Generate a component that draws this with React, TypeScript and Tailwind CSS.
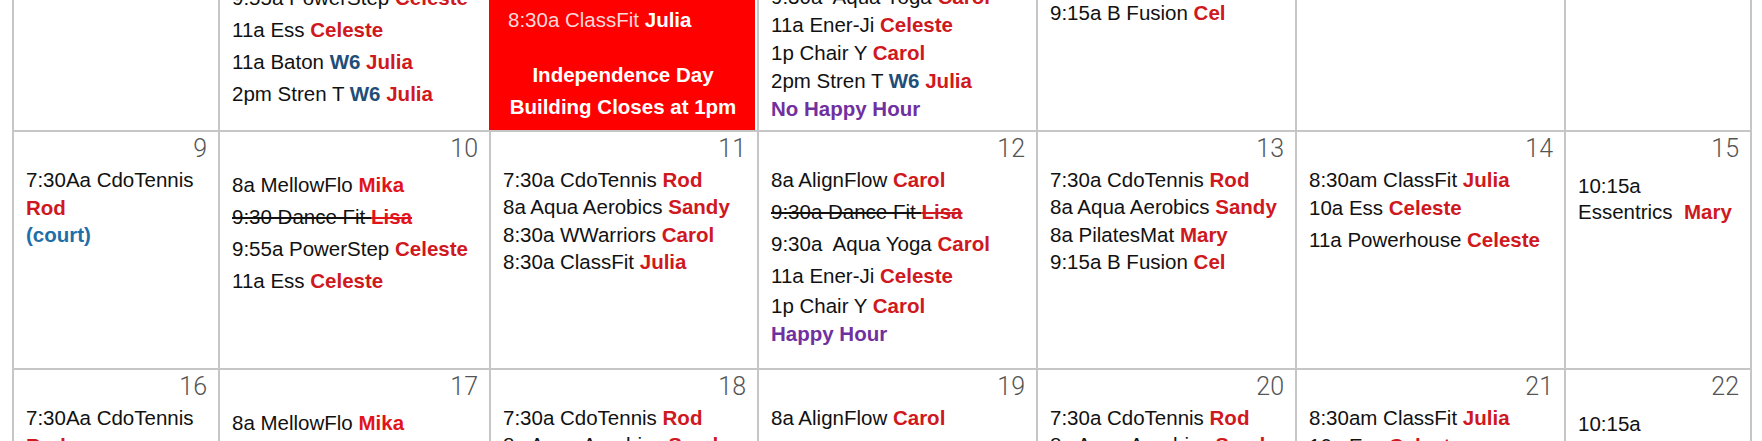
import React from 'react'

type Kind = 'red' | 'hot' | 'w6' | 'court' | 'purple' | 'pink' | 'white'
type Part = { t: string; k?: Kind; s?: boolean }
type Line = { p: Part[]; cls?: string }
type Cell = { day?: number; lh?: string; mt?: string; pb?: string; lines: Line[] }

const KIND: Record<Kind, string> = {
  red: 'font-bold text-[#cf1820]',
  hot: 'font-bold text-[#e3131b]',
  w6: 'font-bold text-[#1f4e79]',
  court: 'font-bold text-[#1f6ea8]',
  purple: 'font-bold text-[#7030a0]',
  pink: 'text-[#fbd9d9]',
  white: 'font-bold text-white',
}

// shorthand builders
const n = (t: string): Part => ({ t })
const r = (t: string): Part => ({ t, k: 'red' })
const L = (...p: Part[]): Line => ({ p })

const W6 = (name: string) => [n(' '), { t: 'W6', k: 'w6' as Kind }, n(' '), r(name)]

// week of the 2nd — only the bottom of it is on screen
const WEEK1: Cell[] = [
  { lines: [] },
  {
    lh: 'leading-[32px]',
    pb: 'pb-[20px]',
    lines: [
      L(n('8a MellowFlo '), { t: 'Mika', k: 'hot' }),
      L({ t: '9:30 Dance Fit ', s: true }, { t: 'Lisa', k: 'hot', s: true }),
      L(n('9:55a PowerStep '), r('Celeste')),
      L(n('11a Ess '), r('Celeste')),
      L(n('11a Baton'), ...W6('Julia')),
      L(n('2pm Stren T'), ...W6('Julia')),
    ],
  },
  { lines: [] }, // holiday, drawn separately
  {
    lh: 'leading-[28px]',
    pb: 'pb-[7px]',
    lines: [
      L(n('8a AlignFlow '), r('Carol')),
      L({ t: '9:30a Dance Fit ', s: true }, { t: 'Lisa', k: 'red', s: true }),
      L(n('9:30a\u00a0 Aqua Yoga '), r('Carol')),
      L(n('11a Ener-Ji '), r('Celeste')),
      L(n('1p Chair Y '), r('Carol')),
      L(n('2pm Stren T'), ...W6('Julia')),
      L({ t: 'No Happy Hour', k: 'purple' }),
    ],
  },
  {
    lh: 'leading-[27px]',
    pb: 'pb-[104px]',
    lines: [
      L(n('7:30a CdoTennis '), r('Rod')),
      L(n('8a Aqua Aerobics '), r('Sandy')),
      L(n('8a PilatesMat '), r('Mary')),
      L(n('9:15a B Fusion '), r('Cel')),
    ],
  },
  { lines: [] },
  { lines: [] },
]

const week = (start: number): Cell[] => [
  {
    day: start,
    lh: 'leading-[27.5px]',
    mt: 'mt-[4px]',
    lines: [L(n('7:30Aa CdoTennis')), L(r('Rod')), L({ t: '(court)', k: 'court' })],
  },
  {
    day: start + 1,
    lh: 'leading-[32px]',
    mt: 'mt-[7px]',
    lines: [
      L(n('8a MellowFlo '), { t: 'Mika', k: 'hot' }),
      L({ t: '9:30 Dance Fit ', s: true }, { t: 'Lisa', k: 'hot', s: true }),
      L(n('9:55a PowerStep '), r('Celeste')),
      L(n('11a Ess '), r('Celeste')),
    ],
  },
  {
    day: start + 2,
    lh: 'leading-[27.3px]',
    mt: 'mt-[4px]',
    lines: [
      L(n('7:30a CdoTennis '), r('Rod')),
      L(n('8a Aqua Aerobics '), r('Sandy')),
      L(n('8:30a WWarriors '), r('Carol')),
      L(n('8:30a ClassFit '), r('Julia')),
    ],
  },
  {
    day: start + 3,
    lh: 'leading-[32px]',
    mt: 'mt-[2px]',
    lines: [
      L(n('8a AlignFlow '), r('Carol')),
      L({ t: '9:30a Dance Fit ', s: true }, { t: 'Lisa', k: 'red', s: true }),
      L(n('9:30a\u00a0 Aqua Yoga '), r('Carol')),
      L(n('11a Ener-Ji '), r('Celeste')),
      { p: [n('1p Chair Y '), r('Carol')], cls: 'leading-[28px]' },
      { p: [{ t: 'Happy Hour', k: 'purple' }], cls: 'leading-[28px]' },
    ],
  },
  {
    day: start + 4,
    lh: 'leading-[27.3px]',
    mt: 'mt-[4px]',
    lines: [
      L(n('7:30a CdoTennis '), r('Rod')),
      L(n('8a Aqua Aerobics '), r('Sandy')),
      L(n('8a PilatesMat '), r('Mary')),
      L(n('9:15a B Fusion '), r('Cel')),
    ],
  },
  {
    day: start + 5,
    lh: 'leading-[28px]',
    mt: 'mt-[4px]',
    lines: [
      L(n('8:30am ClassFit '), r('Julia')),
      L(n('10a Ess '), r('Celeste')),
      { p: [n('11a Powerhouse '), r('Celeste')], cls: 'mt-[4px]' },
    ],
  },
  {
    day: start + 6,
    lh: 'leading-[26px]',
    mt: 'mt-[11px]',
    lines: [L(n('10:15a')), L(n('Essentrics\u00a0 '), r('Mary'))],
  },
]

const EventLine = ({ line }: { line: Line }) => (
  <div className={`shrink-0 whitespace-nowrap ${line.cls ?? ''}`}>
    {line.p.map((part, i) => (
      <span key={i} className={`${part.k ? KIND[part.k] : ''} ${part.s ? 'line-through' : ''}`}>
        {part.t}
      </span>
    ))}
  </div>
)

const lineColor = 'border-[#c6c6c6]'

function TopCell({ cell, last }: { cell: Cell; last: boolean }) {
  return (
    <div
      className={`border-l-2 ${last ? 'border-r-2' : ''} ${lineColor} overflow-hidden flex flex-col justify-end pl-[12px] ${cell.lh ?? ''} ${cell.pb ?? ''}`}
    >
      {cell.lines.map((l, i) => (
        <EventLine key={i} line={l} />
      ))}
    </div>
  )
}

function HolidayCell() {
  return (
    <div className="border-l-2 border-[#ff0000] overflow-hidden flex">
      <div className="flex-1 mr-[2px] bg-[#ff0000] flex flex-col justify-end pb-[7px]">
        <div className="shrink-0 pl-[17px] leading-[27px] whitespace-nowrap">
          <span className={KIND.pink}>8:30a WWarriors </span>
          <span className={KIND.white}>Carol</span>
        </div>
        <div className="shrink-0 pl-[17px] leading-[27px] mb-[26px] whitespace-nowrap">
          <span className={KIND.pink}>8:30a ClassFit </span>
          <span className={KIND.white}>Julia</span>
        </div>
        <div className="shrink-0 text-center font-bold text-white leading-[32px]">Independence Day</div>
        <div className="shrink-0 text-center font-bold text-white leading-[32px]">Building Closes at 1pm</div>
      </div>
    </div>
  )
}

function DayCell({ cell, last }: { cell: Cell; last: boolean }) {
  return (
    <div className={`border-l-2 border-t-2 ${last ? 'border-r-2' : ''} ${lineColor} flex flex-col overflow-hidden`}>
      <div className="text-right pr-[11px] pt-[4px] font-['Roboto',sans-serif] font-light text-[25px] leading-[26px] text-[#555]">
        {cell.day}
      </div>
      <div className={`pl-[12px] ${cell.lh ?? ''} ${cell.mt ?? ''}`}>
        {cell.lines.map((l, i) => (
          <EventLine key={i} line={l} />
        ))}
      </div>
    </div>
  )
}

export default function App() {
  const rows = [week(9), week(16)]
  return (
    <div className="w-[1762px] h-[441px] overflow-hidden bg-white font-['Liberation_Sans',Arial,sans-serif] text-[20.5px] text-[#111]">
      <div className="ml-[12px] grid grid-cols-[206px_271px_268px_279px_259px_269px_188px] grid-rows-[130px_238px_238px]">
        {WEEK1.map((c, i) =>
          i === 2 ? <HolidayCell key={i} /> : <TopCell key={i} cell={c} last={i === 6} />
        )}
        {rows.map((row) => row.map((c, i) => <DayCell key={c.day} cell={c} last={i === 6} />))}
      </div>
    </div>
  )
}
